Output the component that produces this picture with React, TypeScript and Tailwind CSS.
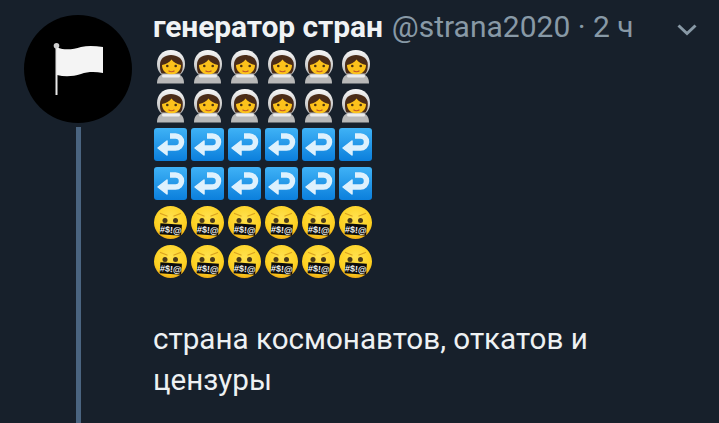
const cols = [0, 1, 2, 3, 4, 5];

function Astronaut({ id }: { id: string }) {
  return (
    <svg width="33" height="35" viewBox="0 0 33 35" className="shrink-0">
      <defs>
        <linearGradient id={id} x1="0" y1="0" x2="0" y2="1">
          <stop offset="0" stopColor="#f7f7f7" />
          <stop offset="1" stopColor="#b5b5b5" />
        </linearGradient>
      </defs>
      <path d="M3 33.5 C3 28 5.5 25 9 24 H24 C27.5 25 30 28 30 33.5 Z" fill="#b8b8b8" />
      <path d="M16.8 0 C25.5 0 31 6 31 14 C31 20 28 24 24 26 H10 C6 24 3 20 3 14 C3 6 8.5 0 16.8 0 Z" fill={`url(#${id})`} />
      <path d="M6 14.5 C6 8.5 11 5 17 5 C23 5 28.8 8.5 28.8 14.5 C28.8 18 28.5 21 26.5 23.5 H7.5 C6 21 6 18 6 14.5 Z" fill="#4a2c18" />
      <path d="M8 15 C12 14 15.5 12.5 17.5 9.5 C19.5 12.5 23 14 27 15 C27 20.5 23 24.5 17.5 24.5 C12 24.5 8 20.5 8 15 Z" fill="#fcc21b" />
      <circle cx="13.3" cy="16" r="1.3" fill="#4a3212" />
      <circle cx="21.7" cy="16" r="1.3" fill="#4a3212" />
      <path d="M14.5 20.8 C16 21.8 19 21.8 20.5 20.8" stroke="#c1552b" strokeWidth="1.2" fill="none" />
      <rect x="8" y="24.5" width="18" height="3" rx="1.5" fill="#ececec" />
    </svg>
  );
}

function ReturnArrow({ id }: { id: string }) {
  return (
    <svg width="33" height="33" viewBox="0 0 33 33" className="shrink-0">
      <defs>
        <linearGradient id={id} x1="0" y1="0" x2="0" y2="1">
          <stop offset="0" stopColor="#3fb2f6" />
          <stop offset="1" stopColor="#0b7fdc" />
        </linearGradient>
      </defs>
      <rect x="0" y="0" width="33" height="33" rx="3" fill={`url(#${id})`} />
      <path d="M12 20 H21.5 A6 6 0 0 0 21.5 8 H16" stroke="#def1fd" strokeWidth="5.5" fill="none" />
      <path d="M4 20 L13 13 V27 Z" fill="#def1fd" strokeLinejoin="round" stroke="#def1fd" strokeWidth="1.5" />
    </svg>
  );
}

function Grawlix({ id }: { id: string }) {
  return (
    <svg width="33" height="33" viewBox="0 0 33 33" className="shrink-0">
      <defs>
        <radialGradient id={id} cx="0.5" cy="0.35" r="0.72">
          <stop offset="0" stopColor="#ffe14d" />
          <stop offset="0.7" stopColor="#fdd020" />
          <stop offset="1" stopColor="#e8990f" />
        </radialGradient>
      </defs>
      <circle cx="16.5" cy="16.5" r="16.5" fill={`url(#${id})`} />
      <path d="M6.5 7.5 L13 10 M26.5 7.5 L20 10" stroke="#d9a21f" strokeWidth="1.3" strokeLinecap="round" />
      <circle cx="11" cy="14.5" r="2.5" fill="#4a3a1a" />
      <circle cx="21.5" cy="14.5" r="2.5" fill="#4a3a1a" />
      <rect x="6" y="18" width="21.5" height="11" fill="#0c0c0c" transform="rotate(4 17 24)" />
      <text x="16.8" y="27" textAnchor="middle" fill="#f1f1f1" fontSize="9" fontWeight="700" fontFamily="'Liberation Sans', sans-serif" transform="rotate(4 17 24)">#$!@</text>
    </svg>
  );
}

function EmojiRow({ kind, row }: { kind: "a" | "r" | "g"; row: number }) {
  return (
    <div className="flex h-[39px] w-[222px] items-start gap-[4px]">
      {cols.map((c) => {
        const id = `${kind}${row}${c}`;
        if (kind === "a") return <Astronaut key={c} id={id} />;
        if (kind === "r") return <ReturnArrow key={c} id={id} />;
        return <Grawlix key={c} id={id} />;
      })}
    </div>
  );
}

export default function App() {
  return (
    <div className="flex h-[423px] w-[719px] overflow-hidden bg-[#17202b] font-['Roboto',sans-serif]">
      <div className="ml-[24px] flex w-[108px] shrink-0 flex-col items-center pt-[15px]">
        <div className="flex h-[108px] w-[108px] items-center justify-center rounded-full bg-black">
          <svg width="50" height="52" viewBox="0 0 50 52">
            <rect x="2.5" y="4" width="2" height="48" fill="#e8e8e8" />
            <circle cx="3.5" cy="2.8" r="2.8" fill="#cfcfcf" />
            <path d="M4 4.5 C12 7.5 20 6.5 28 4 C35 2.5 42 3 50 4 V30 C42 28.5 35 28.5 28 31 C20 33.5 12 34 4 32 Z" fill="#f4f4f4" />
          </svg>
        </div>
        <div className="mt-[4px] w-[5px] flex-1 bg-[#4a6480]" />
      </div>
      <div className="ml-[21px] flex min-w-0 flex-1 flex-col">
        <div className="flex h-[35px] items-center pt-[19px] text-[30px] leading-[30px]">
          <span className="font-bold tracking-[-0.1px] text-[#f0f3f5]">генератор стран</span>
          <span className="ml-[9px] whitespace-nowrap text-[#8899a6]">@strana2020 · 2 ч</span>
          <svg width="20" height="12" viewBox="0 0 20 12" className="ml-[43px] mt-[6px] shrink-0">
            <path d="M1.5 1.5 L10 9.5 L18.5 1.5" stroke="#8899a6" strokeWidth="3" fill="none" />
          </svg>
        </div>
        <div className="ml-[1px] mt-[15px] flex flex-col">
          <EmojiRow kind="a" row={0} />
          <EmojiRow kind="a" row={1} />
          <EmojiRow kind="r" row={0} />
          <EmojiRow kind="r" row={1} />
          <EmojiRow kind="g" row={0} />
          <EmojiRow kind="g" row={1} />
        </div>
        <p className="mt-[35px] w-[450px] text-[29.6px] leading-[41px] text-[#eef1f3]">
          страна космонавтов, откатов и цензуры
        </p>
      </div>
    </div>
  );
}
